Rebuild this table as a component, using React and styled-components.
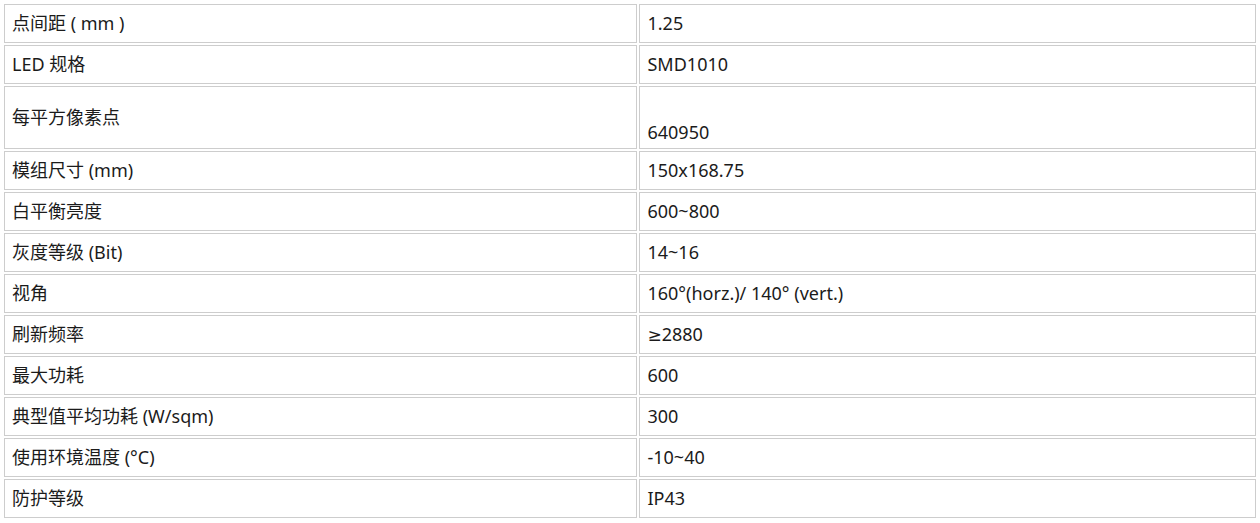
import React from "react";
import styled, { createGlobalStyle } from "styled-components";

const Global = createGlobalStyle`
  html, body { margin: 0; padding: 0; background: #ffffff; }
  body { font-family: "Noto Sans", "Noto Sans CJK SC", sans-serif; }
`;

const SpecTable = styled.table`
  margin: 2px;
  border-collapse: separate;
  border-spacing: 2px;
  font-family: "Noto Sans", "Noto Sans CJK SC", sans-serif;
  font-size: 18px;
  color: #1b1b1b;
`;

const Row = styled.tr`
  height: ${(p) => (p.$tall ? 63 : 39)}px;
`;

const Cell = styled.td`
  box-sizing: border-box;
  width: ${(p) => (p.$value ? 617 : 634)}px;
  border: 1px solid #cdcdcd;
  padding: ${(p) => (p.$bottom ? "0 7px 5px" : "0 7px 1px")};
  line-height: 22px;
  vertical-align: ${(p) => (p.$bottom ? "bottom" : "middle")};
  text-align: left;
  white-space: nowrap;
`;

const Symbol = styled.span`
  font-family: "DejaVu Sans", "Liberation Sans", sans-serif;
  font-size: 17px;
`;

const rows = [
  ["点间距 ( mm )", "1.25"],
  ["LED 规格", "SMD1010"],
  ["每平方像素点", "640950", true],
  ["模组尺寸 (mm)", "150x168.75"],
  ["白平衡亮度", "600~800"],
  ["灰度等级 (Bit)", "14~16"],
  ["视角", "160°(horz.)/ 140° (vert.)"],
  ["刷新频率", <><Symbol>≥</Symbol>2880</>],
  ["最大功耗", "600"],
  ["典型值平均功耗 (W/sqm)", "300"],
  ["使用环境温度 (°C)", "-10~40"],
  ["防护等级", "IP43"],
];

export default function App() {
  return (
    <>
      <Global />
      <SpecTable>
        <tbody>
          {rows.map(([label, value, tall]) => (
            <Row key={label} $tall={tall}>
              <Cell>{label}</Cell>
              <Cell $value $bottom={tall}>
                {value}
              </Cell>
            </Row>
          ))}
        </tbody>
      </SpecTable>
    </>
  );
}
